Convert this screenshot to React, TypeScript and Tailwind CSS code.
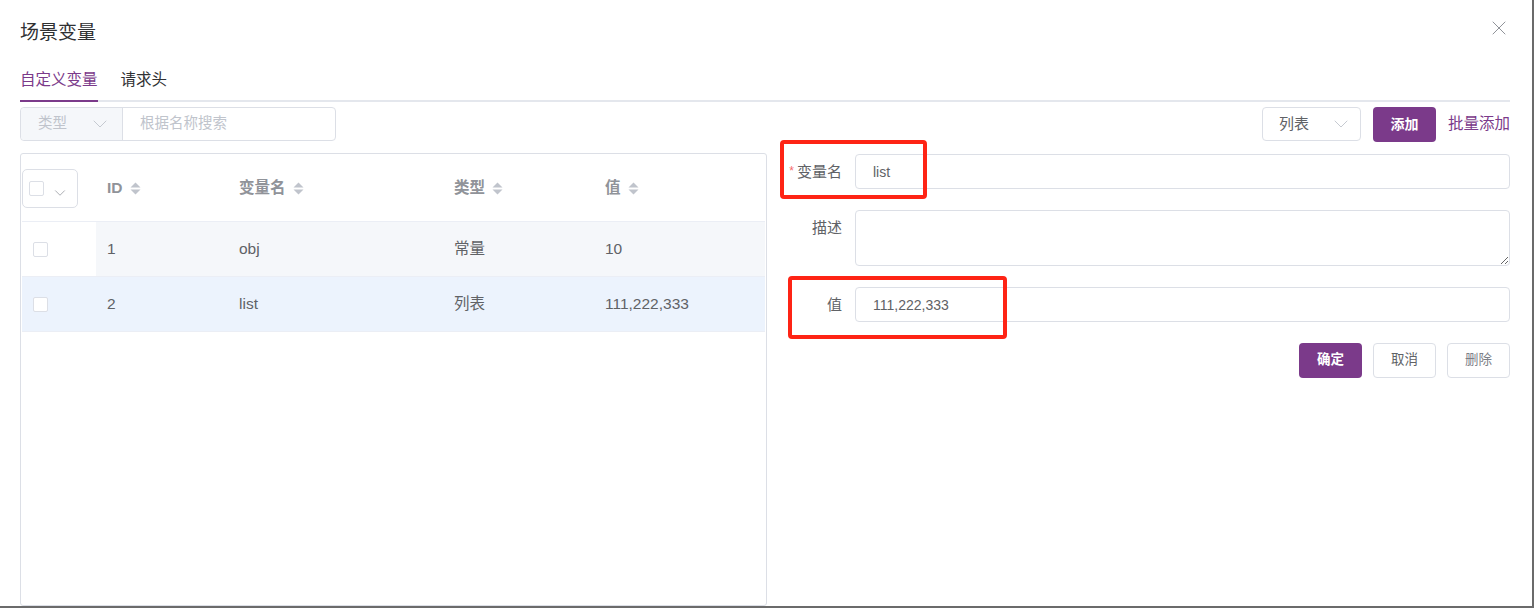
import { ChevronDown, X } from "lucide-react"

const purple = "#7b3a8a"

const rows = [
  { id: "1", name: "obj", type: "常量", value: "10", selected: false },
  { id: "2", name: "list", type: "列表", value: "111,222,333", selected: true },
]

function SortIcon() {
  return (
    <svg width="11" height="15" viewBox="0 0 11 15" className="ml-[7px]">
      <path d="M0.5 6.5 L5.5 1.5 L10.5 6.5 Z" fill="#c0c4cc" />
      <path d="M0.5 8.5 L5.5 13.5 L10.5 8.5 Z" fill="#c0c4cc" />
    </svg>
  )
}

function Checkbox() {
  return <span className="block w-[15px] h-[15px] rounded-[2px] border border-[#dcdfe6] bg-white" />
}

function FormRow({ label, required, children, top }: { label: string; required?: boolean; children: React.ReactNode; top?: boolean }) {
  return (
    <div className={`flex ${top ? "items-start" : "items-center"}`}>
      <label className="w-[75px] shrink-0 pr-[13px] text-right text-[15px] leading-[35px] text-[#606266]">
        {required && <span className="mr-[3px] text-[12px] align-top text-[#f56c6c]">*</span>}
        {label}
      </label>
      {children}
    </div>
  )
}

export default function App() {
  const cols = ["w-[132px]", "w-[215px]", "w-[151px]", "flex-1"]
  const headers = ["ID", "变量名", "类型", "值"]

  return (
    <div className="relative flex h-[608px] w-[1534px] flex-col border-r-2 border-b-2 border-[#6b6b6b] bg-white pl-[20px] pr-[22px] font-['Liberation_Sans','Noto_Sans_CJK_SC',sans-serif]">
      {/* title */}
      <div className="pt-[21px] text-[19px] leading-[24px] text-[#303133]">场景变量</div>
      <button className="absolute right-[21px] top-[16px] text-[#909399]">
        <X size={24} strokeWidth={1} />
      </button>

      {/* tabs */}
      <div className="mt-[15px] flex gap-[23px] border-b-2 border-[#e4e7ed]">
        <div className="-mb-[2px] h-[42px] border-b-2 text-[15.5px] leading-[40px]" style={{ borderColor: purple, color: purple }}>
          自定义变量
        </div>
        <div className="-mb-[2px] h-[42px] border-b-2 border-transparent text-[15.5px] leading-[40px] text-[#303133]">请求头</div>
      </div>

      {/* toolbar */}
      <div className="mt-[5px] flex h-[34px] items-center justify-between">
        <div className="flex h-full w-[316px] rounded-[4px] border border-[#dcdfe6]">
          <div className="flex w-[102px] items-center justify-between rounded-l-[4px] border-r border-[#dcdfe6] bg-[#f5f7fa] pl-[17px] pr-[10px] text-[14.5px] text-[#c0c4cc]">
            <span>类型</span>
            <ChevronDown size={24} strokeWidth={0.9} />
          </div>
          <div className="flex items-center pl-[17px] text-[14.5px] text-[#c0c4cc]">根据名称搜索</div>
        </div>
        <div className="flex h-full items-center">
          <div className="flex h-[34px] w-[99px] items-center justify-between rounded-[4px] border border-[#dcdfe6] pl-[16px] pr-[7px] text-[15px] text-[#606266]">
            <span>列表</span>
            <ChevronDown size={24} strokeWidth={0.9} className="text-[#c0c4cc]" />
          </div>
          <button className="ml-[12px] h-[35px] w-[63px] rounded-[4px] text-[14px] font-bold text-white" style={{ backgroundColor: purple }}>
            添加
          </button>
          <a className="ml-[12px] text-[15.5px]" style={{ color: purple }}>
            批量添加
          </a>
        </div>
      </div>

      {/* main */}
      <div className="mt-[12px] flex min-h-0 flex-1">
        {/* table */}
        <div className="w-[747px] shrink-0 rounded-[3px] border border-[#dcdfe6] p-[1px]">
          <div className="flex h-[67px] items-center border-b border-[#ebeef5]">
            <div className="w-[74px] shrink-0">
              <div className="flex h-[39px] w-[56px] items-center rounded-[5px] border border-[#dcdfe6] pl-[6px]">
                <span className="block h-[15px] w-[15px] rounded-[2px] border border-[#dcdfe6]" />
                <ChevronDown size={18} strokeWidth={1} className="ml-[7px] mt-[9px] text-[#909399]" />
              </div>
            </div>
            {headers.map((h, i) => (
              <div key={h} className={`${cols[i]} flex items-center pl-[11px] text-[15.5px] font-bold text-[#909399]`}>
                {h}
                <SortIcon />
              </div>
            ))}
          </div>
          {rows.map((r) => (
            <div key={r.id} className={`flex h-[55px] items-center border-b border-[#ebeef5] ${r.selected ? "bg-[#ecf3fd]" : ""}`}>
              <div className="flex h-full w-[74px] shrink-0 items-center pl-[11px]">
                <Checkbox />
              </div>
              <div className={`flex h-full flex-1 items-center text-[15.5px] text-[#606266] ${r.selected ? "" : "bg-[#f5f7fa]"}`}>
                <div className={`${cols[0]} pl-[11px]`}>{r.id}</div>
                <div className={`${cols[1]} pl-[11px]`}>{r.name}</div>
                <div className={`${cols[2]} pl-[11px]`}>{r.type}</div>
                <div className={`${cols[3]} pl-[11px]`}>{r.value}</div>
              </div>
            </div>
          ))}
        </div>

        {/* form */}
        <div className="ml-[13px] flex flex-1 flex-col gap-[21px] pt-[1px]">
          <FormRow label="变量名" required>
            <input
              readOnly
              value="list"
              className="h-[35px] flex-1 rounded-[4px] border border-[#dcdfe6] pl-[17px] text-[14px] text-[#606266] outline-none"
            />
          </FormRow>
          <FormRow label="描述" top>
            <textarea readOnly className="h-[56px] flex-1 rounded-[4px] border border-[#dcdfe6] px-[15px] text-[14px] outline-none" />
          </FormRow>
          <FormRow label="值">
            <input
              readOnly
              value="111,222,333"
              className="h-[35px] flex-1 rounded-[4px] border border-[#dcdfe6] pl-[17px] text-[14px] text-[#606266] outline-none"
            />
          </FormRow>
          <div className="flex justify-end gap-[11px]">
            <button className="h-[35px] w-[63px] rounded-[4px] text-[13.5px] font-semibold text-white" style={{ backgroundColor: purple }}>
              确定
            </button>
            <button className="h-[35px] w-[63px] rounded-[4px] border border-[#dcdfe6] bg-white text-[13.5px] text-[#606266]">取消</button>
            <button className="h-[35px] w-[63px] rounded-[4px] border border-[#dcdfe6] bg-white text-[13.5px] text-[#7d8088]">删除</button>
          </div>
        </div>
      </div>

      {/* annotation boxes */}
      <div className="pointer-events-none absolute left-[780px] top-[140px] h-[59px] w-[147px] rounded-[4px] border-4 border-[#fe2415]" />
      <div className="pointer-events-none absolute left-[788px] top-[276px] h-[63px] w-[219px] rounded-[4px] border-4 border-[#fe2415]" />
    </div>
  )
}
